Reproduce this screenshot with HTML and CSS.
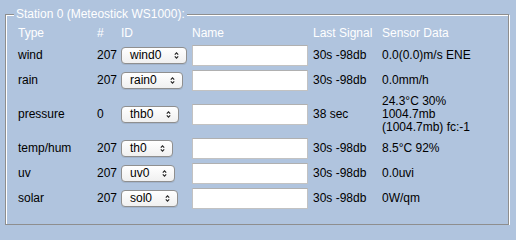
FILE: index.html
```
<!DOCTYPE html>
<html>
<head>
<meta charset="utf-8">
<title>Station 0</title>
<link rel="stylesheet" href="styles.css">
</head>
<body>
<fieldset class="station">
  <legend class="station-title">Station 0 (Meteostick WS1000):</legend>
  <table class="sensors">
    <colgroup>
      <col class="c-type"><col class="c-num"><col class="c-id"><col class="c-name"><col class="c-last"><col class="c-data">
    </colgroup>
    <thead>
      <tr><th>Type</th><th>#</th><th>ID</th><th>Name</th><th>Last Signal</th><th>Sensor Data</th></tr>
    </thead>
    <tbody>
      <tr>
        <td>wind</td><td>207</td>
        <td><span class="popup">wind0<svg class="arrows" width="5" height="9" viewBox="0 0 5 9"><path d="M0.8 3.6 L2.5 1.8 L4.2 3.6 M0.8 5.4 L2.5 7.2 L4.2 5.4"/></svg></span></td>
        <td><input class="name" type="text"></td>
        <td>30s -98db</td><td>0.0(0.0)m/s ENE</td>
      </tr>
      <tr>
        <td>rain</td><td>207</td>
        <td><span class="popup">rain0<svg class="arrows" width="5" height="9" viewBox="0 0 5 9"><path d="M0.8 3.6 L2.5 1.8 L4.2 3.6 M0.8 5.4 L2.5 7.2 L4.2 5.4"/></svg></span></td>
        <td><input class="name" type="text"></td>
        <td>30s -98db</td><td>0.0mm/h</td>
      </tr>
      <tr>
        <td>pressure</td><td>0</td>
        <td><span class="popup">thb0<svg class="arrows" width="5" height="9" viewBox="0 0 5 9"><path d="M0.8 3.6 L2.5 1.8 L4.2 3.6 M0.8 5.4 L2.5 7.2 L4.2 5.4"/></svg></span></td>
        <td><input class="name" type="text"></td>
        <td>38 sec</td><td>24.3°C 30%<br>1004.7mb<br>(1004.7mb) fc:-1</td>
      </tr>
      <tr>
        <td>temp/hum</td><td>207</td>
        <td><span class="popup">th0<svg class="arrows" width="5" height="9" viewBox="0 0 5 9"><path d="M0.8 3.6 L2.5 1.8 L4.2 3.6 M0.8 5.4 L2.5 7.2 L4.2 5.4"/></svg></span></td>
        <td><input class="name" type="text"></td>
        <td>30s -98db</td><td>8.5°C 92%</td>
      </tr>
      <tr>
        <td>uv</td><td>207</td>
        <td><span class="popup">uv0<svg class="arrows" width="5" height="9" viewBox="0 0 5 9"><path d="M0.8 3.6 L2.5 1.8 L4.2 3.6 M0.8 5.4 L2.5 7.2 L4.2 5.4"/></svg></span></td>
        <td><input class="name" type="text"></td>
        <td>30s -98db</td><td>0.0uvi</td>
      </tr>
      <tr>
        <td>solar</td><td>207</td>
        <td><span class="popup">sol0<svg class="arrows" width="5" height="9" viewBox="0 0 5 9"><path d="M0.8 3.6 L2.5 1.8 L4.2 3.6 M0.8 5.4 L2.5 7.2 L4.2 5.4"/></svg></span></td>
        <td><input class="name" type="text"></td>
        <td>30s -98db</td><td>0W/qm</td>
      </tr>
    </tbody>
  </table>
</fieldset>
</body>
</html>
```

FILE: styles.css
```
html, body {
  margin: 0;
  padding: 0;
  background: #b0c4de;
}
body {
  font-family: "Liberation Sans", Arial, Helvetica, sans-serif;
  font-size: 12px;
  line-height: 13px;
  color: #000;
}
.station {
  margin: 8px 7px 0 5px;
  padding: 5px 8px 13px 8px;
  border: 1px solid #8e8e8e;
  box-shadow: inset 1px 1px 0 #fff, 1px 1px 0 #fff;
  min-width: 0;
}
.station-title {
  color: #fff;
  padding: 0 2px;
  background: #b0c4de;
  font-size: 12px;
  line-height: 13px;
}
.sensors {
  table-layout: fixed;
  width: 486px;
  border-collapse: separate;
  border-spacing: 0;
}
.c-type { width: 79px; }
.c-num { width: 24px; }
.c-id { width: 71px; }
.c-name { width: 121px; }
.c-last { width: 69px; }
.c-data { width: 122px; }
.sensors th {
  color: #fff;
  font-weight: normal;
  text-align: left;
  padding: 1px 0 3px 4px;
  white-space: nowrap;
}
.sensors td {
  padding: 2px 0 2px 4px;
  vertical-align: middle;
  white-space: nowrap;
}
.popup {
  display: inline-flex;
  align-items: center;
  box-sizing: border-box;
  height: 17px;
  padding: 0 7px 0 8px;
  border: 1px solid #8f8f8f;
  border-radius: 4px;
  background: linear-gradient(#ffffff, #f0f0f0);
  box-shadow: 0 1px 0 rgba(0, 0, 0, 0.08);
  vertical-align: middle;
  color: #000;
}
.arrows {
  margin-left: 13px;
  display: block;
}
.arrows path {
  fill: none;
  stroke: #222;
  stroke-width: 1.1;
}
.name {
  box-sizing: border-box;
  width: 116px;
  height: 21px;
  margin: 0;
  padding: 0 3px;
  border: 1px solid #c2c2c2;
  border-top-color: #b0b0b0;
  background: #fff;
  vertical-align: middle;
  font: inherit;
  outline: none;
}
```
